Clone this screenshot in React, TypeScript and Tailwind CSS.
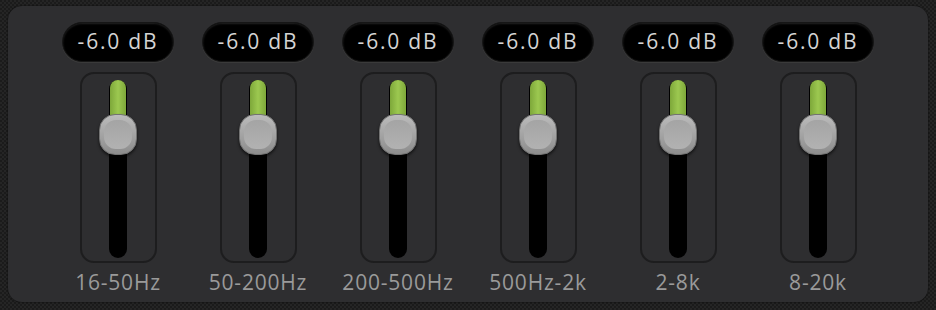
const bands = ['16-50Hz', '50-200Hz', '200-500Hz', '500Hz-2k', '2-8k', '8-20k'];

function Fader({ label, value }: { label: string; value: string }) {
  return (
    <div className="flex w-[140px] flex-col items-center">
      {/* value readout */}
      <div className="flex h-[40px] w-[112px] items-center justify-center rounded-full border border-[#161616] bg-black shadow-[0_1px_0_#3a3a3a,inset_0_1px_2px_#222] text-[21px] tracking-[1.8px] text-[#d4d4d4]">
        {value}
      </div>

      {/* slider well */}
      <div className="mt-[10px] flex h-[191px] w-[77px] justify-center rounded-[14px] border-2 border-[#1d1d1e] pt-[6px] pb-[3px]">
        <div className="relative h-full w-[18px] rounded-full bg-black">
          <div className="absolute left-[1px] right-[1px] top-0 h-[40px] rounded-t-full bg-gradient-to-r from-[#7ea83a] via-[#9cc850] to-[#7ea83a]" />
          <div className="absolute left-1/2 top-[34px] h-[41px] w-[38px] -translate-x-1/2 rounded-[16px] border border-[#727272] bg-gradient-to-b from-[#bcbcbc] via-[#a4a4a4] to-[#8c8c8c] shadow-[0_2px_3px_rgba(0,0,0,0.6)]">
            <div className="mx-[4px] mt-[5px] h-[29px] rounded-[12px] bg-gradient-to-b from-[#a4a4a4] to-[#b2b2b2]" />
          </div>
        </div>
      </div>

      <div className="mt-[4px] text-[21px] tracking-[0.8px] text-[#9a9a9a]">{label}</div>
    </div>
  );
}

export default function App() {
  return (
    <div
      className="h-[310px] w-[936px] bg-[repeating-conic-gradient(#252525_0%_25%,#1b1b1b_0%_50%)] bg-[length:4px_4px] p-[6px_8px_8px_8px]"
      style={{ fontFamily: '"Open Sans", "Liberation Sans", sans-serif' }}
    >
      <div className="flex h-[296px] w-[920px] justify-center rounded-[14px] bg-[#2e2e30] pt-[16px] shadow-[0_0_2px_rgba(0,0,0,0.8)]">
        {bands.map((b) => (
          <Fader key={b} label={b} value="-6.0 dB" />
        ))}
      </div>
    </div>
  );
}
